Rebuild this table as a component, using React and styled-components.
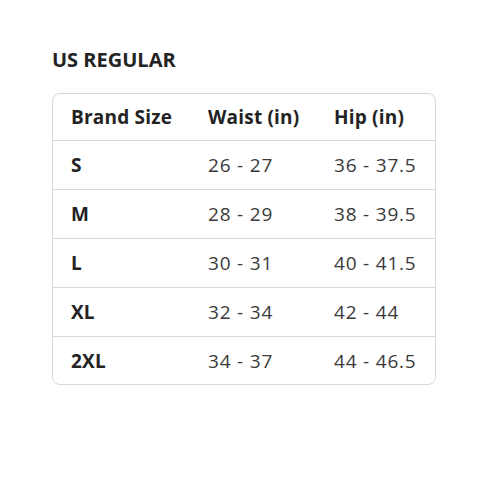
import React from "react";
import styled, { createGlobalStyle } from "styled-components";

const Global = createGlobalStyle`
  html, body { margin: 0; padding: 0; background: #fff; }
  body { font-family: "Open Sans", "Liberation Sans", sans-serif; color: #0f1111; }
`;

const Page = styled.div`
  padding: 50px 64px 0 52px;
  width: 500px;
  box-sizing: border-box;
`;

const Title = styled.h2`
  margin: 0 0 23px 0;
  font-size: 20px;
  font-weight: 700;
  line-height: 20px;
  color: #232323;
`;

const Table = styled.div`
  width: 384px;
  border: 1px solid #d5d9d9;
  border-radius: 8px;
  box-sizing: border-box;
  overflow: hidden;
`;

const Row = styled.div`
  display: grid;
  grid-template-columns: 137px 126px 1fr;
  align-items: center;
  padding-left: 18px;
  height: ${(p) => p.$h}px;
  border-top: ${(p) => (p.$header ? "none" : "1px solid #d5d9d9")};
  box-sizing: border-box;
`;

const Cell = styled.div`
  font-size: 19px;
  line-height: 24px;
  white-space: nowrap;
  font-weight: ${(p) => (p.$bold ? 700 : 400)};
  letter-spacing: ${(p) => (p.$bold ? "0.2px" : "0.8px")};
  color: ${(p) => (p.$bold ? "#232323" : "#3a3a3a")};
`;

const rows = [
  ["S", "26 - 27", "36 - 37.5"],
  ["M", "28 - 29", "38 - 39.5"],
  ["L", "30 - 31", "40 - 41.5"],
  ["XL", "32 - 34", "42 - 44"],
  ["2XL", "34 - 37", "44 - 46.5"],
];

export default function App() {
  return (
    <>
      <Global />
      <Page>
        <Title>US REGULAR</Title>
        <Table>
          <Row $header $h={46}>
            <Cell $bold>Brand Size</Cell>
            <Cell $bold>Waist (in)</Cell>
            <Cell $bold>Hip (in)</Cell>
          </Row>
          {rows.map((r, i) => (
            <Row key={r[0]} $h={i === rows.length - 1 ? 48 : 49}>
              <Cell $bold>{r[0]}</Cell>
              <Cell>{r[1]}</Cell>
              <Cell>{r[2]}</Cell>
            </Row>
          ))}
        </Table>
      </Page>
    </>
  );
}
